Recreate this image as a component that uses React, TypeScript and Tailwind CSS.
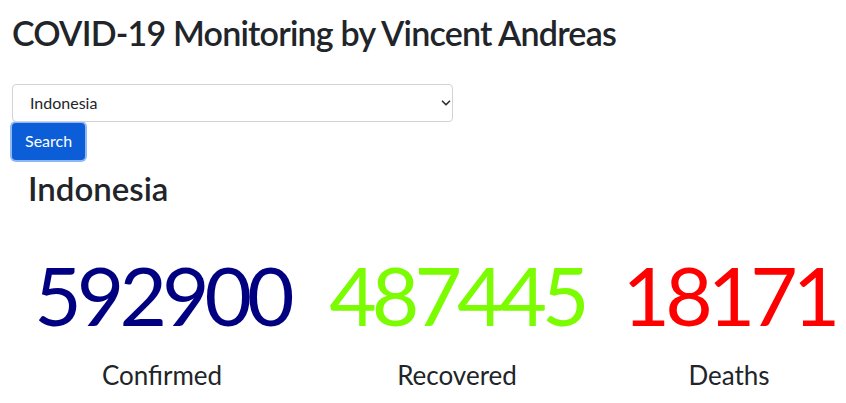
import { ChevronDown } from "lucide-react";

const STATS = [
  { value: 592900, label: "Confirmed", color: "text-[#000080]", width: "w-[268px]" },
  { value: 487445, label: "Recovered", color: "text-[#7cfc00]", width: "w-[322px]" },
  { value: 18171, label: "Deaths", color: "text-[#ff0000]", width: "w-[222px]" },
];

export default function App() {
  return (
    <div className="min-h-screen overflow-hidden bg-white px-3 font-['Lato','Open_Sans',sans-serif] text-[#212529]">
      <h1 className="mt-[13px] text-[34px] font-semibold leading-[1.2] tracking-[-0.8px]">
        COVID-19 Monitoring by Vincent Andreas
      </h1>

      <div className="relative mt-[30px] w-[441px]">
        <select
          defaultValue="Indonesia"
          className="block h-[38px] w-full appearance-none rounded border border-[#ced4da] bg-white pl-[17px] pr-9 text-base text-[#212529] outline-none"
        >
          <option>Indonesia</option>
          <option>Malaysia</option>
          <option>Singapore</option>
        </select>
        <ChevronDown
          className="pointer-events-none absolute right-0 top-[12px] text-[#333]"
          size={14}
          strokeWidth={3}
        />
      </div>

      <button className="mt-px h-[37px] rounded bg-[#0b5ed7] px-[13px] text-base text-white ring-2 ring-[#8db8f5]">
        Search
      </button>

      <div className="px-4">
        <h1 className="mt-[9px] text-[33px] font-semibold leading-[1.2]">Indonesia</h1>

        <div className="mt-[45px] flex">
          {STATS.map((s) => (
            <div key={s.label} className={`${s.width} shrink-0 text-center`}>
              <div className={`text-[82px] leading-none tracking-[-5px] ${s.color}`}>{s.value}</div>
              <div className="mt-[25px] text-[26px] leading-[1.2]">{s.label}</div>
            </div>
          ))}
        </div>
      </div>
    </div>
  );
}
